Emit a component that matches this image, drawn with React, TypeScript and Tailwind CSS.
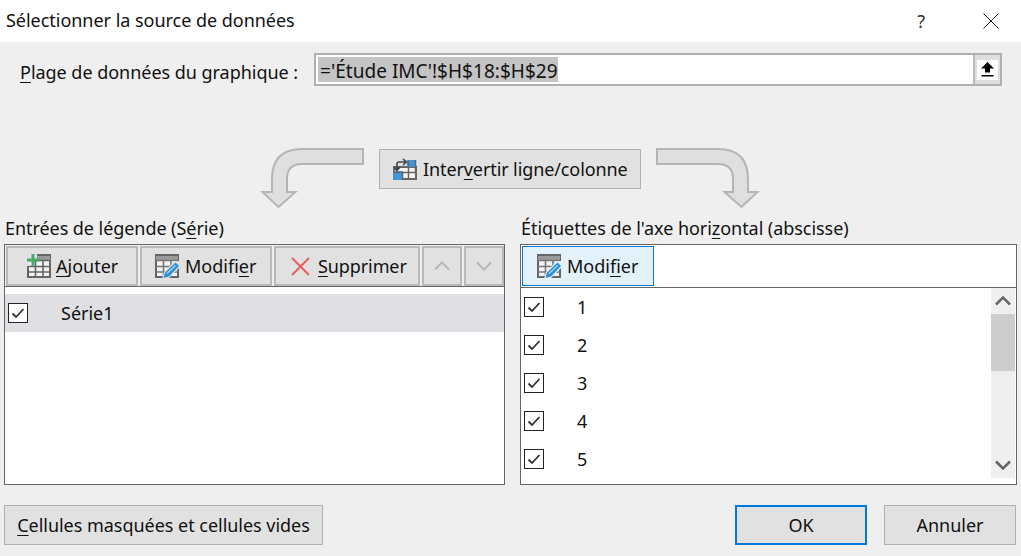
import React from 'react';

const Key = ({ children }: { children: React.ReactNode }) => (
  <span className="underline underline-offset-[3px] decoration-1">{children}</span>
);

const Check = () => (
  <span className="flex h-[20px] w-[20px] items-center justify-center border border-[#222] bg-white">
    <svg width="14" height="12" viewBox="0 0 14 12" fill="none" stroke="#333" strokeWidth="1.8">
      <path d="M1.5 6.5 L5 10 L12.5 2" />
    </svg>
  </span>
);

const TableIcon = ({ plus }: { plus?: boolean }) => (
  <svg width="24" height="24" viewBox="0 0 24 24" className="shrink-0">
    <rect x="1" y="1" width="22" height="22" fill="#f3f3f3" stroke="#666" strokeWidth="2" />
    <rect x="1" y="2" width="22" height="4" fill="#999" />
    <path d="M1 6.5 H23 M1 12.5 H23 M1 18 H23 M8.5 6 V23 M16 6 V23" stroke="#666" strokeWidth="1.6" fill="none" />
    {plus && (
      <>
        <rect x="-1" y="-1" width="11" height="7" fill="#e1e1e1" />
        <rect x="-1" y="-1" width="3" height="13" fill="#e1e1e1" />
        <path d="M6 0 V12 M0 6 H12" stroke="#46ad68" strokeWidth="3" />
      </>
    )}
  </svg>
);

const EditIcon = ({ bg = '#e1e1e1' }: { bg?: string }) => (
  <svg width="25" height="25" viewBox="0 0 25 25" className="shrink-0">
    <rect x="1" y="1" width="22" height="22" fill="#f3f3f3" stroke="#666" strokeWidth="2" />
    <rect x="1" y="2" width="22" height="4" fill="#999" />
    <path d="M1 6.5 H23 M1 12.5 H23 M1 18 H23 M8.5 6 V23 M16 6 V23" stroke="#777" strokeWidth="1.6" fill="none" />
    <path d="M7 25 L9 18 L20 7 L25 7 L25 13 L14 24 Z" fill={bg} />
    <path d="M8.5 24 L10 18.5 L20.5 8.5 L24 12 L14 22.5 Z" fill="#2f90da" />
    <path d="M12 19.5 L20.5 11.5" stroke="#a9d6f5" strokeWidth="1.2" />
  </svg>
);

const SwapIcon = () => (
  <svg width="24" height="22" viewBox="0 0 24 22" className="shrink-0">
    <rect x="1" y="9" width="22" height="12" fill="#f5f5f5" stroke="#666" strokeWidth="2" />
    <rect x="14" y="2" width="9" height="7" fill="#3f97dd" />
    <rect x="0" y="13" width="10" height="9" fill="#3f97dd" />
    <path d="M0 14.5 H24 M9.5 14 V22 M15.5 3 V22 M22.5 2 V14" stroke="#666" strokeWidth="1.5" fill="none" />
    <path d="M4 12 V6 Q4 4 6 4 H13 M1 9 L4 12.5 L7 9 M10 1 L13.5 4 L10 7" stroke="#444" strokeWidth="1.6" fill="none" />
  </svg>
);

const CurveArrow = ({ flip }: { flip?: boolean }) => (
  <svg width="105" height="62" viewBox="260 147 105 62" className={flip ? '-scale-x-100' : ''}>
    <path
      d="M363 149 H302 Q272 149 272 179 V192 H262.5 L278.5 207 L295.5 192 H287 V179 Q287 164 302 164 H363 Z"
      fill="#dfdfdf"
      stroke="#b5b5b5"
      strokeWidth="2"
    />
  </svg>
);

const Btn = ({ className, children }: { className: string; children: React.ReactNode }) => (
  <div className={`flex h-[40px] items-center border-2 border-[#b9b9b9] bg-[#e1e1e1] ${className}`}>{children}</div>
);

const Chevron = ({ down, color, w = 2 }: { down?: boolean; color: string; w?: number }) => (
  <svg width="16" height="10" viewBox="0 0 16 10" fill="none" stroke={color} strokeWidth={w}>
    <path d={down ? 'M1 1.5 L8 8.5 L15 1.5' : 'M1 8.5 L8 1.5 L15 8.5'} />
  </svg>
);

export default function App() {
  return (
    <div className="flex h-[556px] w-[1021px] flex-col overflow-hidden bg-[#efefef] font-['Noto_Sans',sans-serif] text-[18px] leading-[24px] text-[#111]">
      {/* title bar */}
      <div className="flex h-[42px] items-center bg-white pl-[6px]">
        <span className="pb-[2px] tracking-[-0.03px]">Sélectionner la source de données</span>
        <span className="ml-auto text-[#333]">?</span>
        <svg width="16" height="16" viewBox="0 0 16 16" stroke="#222" className="ml-[58px] mr-[22px]">
          <path d="M0.5 0.5 L15.5 15.5 M15.5 0.5 L0.5 15.5" />
        </svg>
      </div>

      {/* range */}
      <div className="mt-[11px] flex h-[33px] items-center">
        <span className="ml-[20px] w-[294px] shrink-0 pt-[5px] tracking-[-0.03px]">
          <Key>P</Key>lage de données du graphique :
        </span>
        <div className="flex h-full w-[688px] items-center border-2 border-[#b0b0b0] bg-white">
          <span className="ml-[2px] block h-[25px] bg-[#c4c4c4] pl-[2px] pt-[3px] text-[19px] leading-[22px] tracking-[0.03px]">='Étude IMC'!$H$18:$H$29</span>
          <div className="ml-auto flex h-full w-[27px] items-center justify-center border-l-2 border-[#b9b9b9] bg-[#dedede] p-[2px]">
            <div className="flex h-[20px] w-[22px] items-center justify-center bg-white">
              <svg width="13" height="15" viewBox="0 0 13 15">
                <path d="M6.5 0 L13 6.5 H9 V10.5 H4 V6.5 H0 Z M0.5 13 H12.5 V14.5 H0.5 Z" fill="#000" />
              </svg>
            </div>
          </div>
        </div>
      </div>

      {/* switch row */}
      <div className="ml-[260px] mt-[61px] flex h-[62px] gap-[14px]">
        <CurveArrow />
        <div className="mt-[2px] flex h-[40px] w-[262px] items-center gap-[6px] border border-[#b0b0b0] bg-[#e1e1e1] pl-[13px]">
          <SwapIcon />
          <span className="tracking-[-0.1px]">
            Inter<Key>v</Key>ertir ligne/colonne
          </span>
        </div>
        <CurveArrow flip />
      </div>

      {/* panels */}
      <div className="mt-[7px] flex gap-[15px] px-[4px]">
        <div className="w-[501px]">
          <div className="ml-[1px] h-[28px] tracking-[-0.06px]">
            Entrées de légende (S<Key>é</Key>rie)
          </div>
          <div className="h-[241px] border border-[#666] bg-white">
            <div className="flex h-[42px] gap-[2px] border-b border-[#666] bg-[#efefef] pl-[1px] pt-[1px]">
              <Btn className="w-[132px] gap-[5px] pl-[19px]">
                <TableIcon plus />
                <span>
                  <Key>A</Key>jouter
                </span>
              </Btn>
              <Btn className="w-[132px] gap-[5px] pl-[13px]">
                <EditIcon />
                <span>
                  Modifi<Key>e</Key>r
                </span>
              </Btn>
              <Btn className="w-[146px] gap-[8px] pl-[15px]">
                <svg width="19" height="19" viewBox="0 0 19 19" stroke="#ee5a5a" strokeWidth="1.8" className="shrink-0">
                  <path d="M1 1 L18 18 M18 1 L1 18" />
                </svg>
                <span className="tracking-[-0.1px]">
                  <Key>S</Key>upprimer
                </span>
              </Btn>
              <Btn className="w-[40px] justify-center">
                <Chevron color="#b7b7b7" />
              </Btn>
              <Btn className="w-[40px] justify-center">
                <Chevron down color="#b7b7b7" />
              </Btn>
            </div>
            <div className="mt-[7px] flex h-[38px] items-center bg-[#e0dfe4] pl-[3px]">
              <Check />
              <span className="ml-[33px]">Série1</span>
            </div>
          </div>
        </div>

        <div className="w-[497px]">
          <div className="ml-[1px] h-[28px] tracking-[-0.05px]">
            Étiquettes de l'axe hori<Key>z</Key>ontal (abscisse)
          </div>
          <div className="h-[241px] border border-[#666] bg-white">
            <div className="flex h-[43px] border-b border-[#666] pl-[1px] pt-[1px]">
              <div className="flex h-[40px] w-[132px] items-center gap-[5px] border border-[#0078d7] bg-[#e3f1fb] pl-[14px]">
                <EditIcon bg="#e3f1fb" />
                <span>
                  Modi<Key>f</Key>ier
                </span>
              </div>
            </div>
            <div className="flex h-[196px]">
              <div className="flex-1">
                {['1', '2', '3', '4', '5'].map((n) => (
                  <div key={n} className="flex h-[38px] items-center pl-[3px]">
                    <Check />
                    <span className="ml-[33px]">{n}</span>
                  </div>
                ))}
              </div>
              <div className="mr-[1px] flex h-[190px] w-[24px] flex-col items-center bg-[#efefef]">
                <div className="flex h-[26px] items-center">
                  <Chevron color="#666" w={2.5} />
                </div>
                <div className="h-[57px] w-full bg-[#cdcdcd]" />
                <div className="flex-1" />
                <div className="flex h-[26px] items-center">
                  <Chevron down color="#666" w={2.5} />
                </div>
              </div>
            </div>
          </div>
        </div>
      </div>

      {/* footer */}
      <div className="mt-[20px] flex px-[4px]">
        <div className="flex h-[40px] w-[319px] items-center justify-center border border-[#b0b0b0] bg-[#e1e1e1]">
          <span className="tracking-[-0.03px]">
            <Key>C</Key>ellules masquées et cellules vides
          </span>
        </div>
        <div className="ml-[412px] flex h-[40px] w-[132px] items-center justify-center border-2 border-[#0078d7] bg-[#e1e1e1]">
          OK
        </div>
        <div className="ml-[17px] flex h-[40px] w-[132px] items-center justify-center border border-[#b0b0b0] bg-[#e1e1e1]">
          Annuler
        </div>
      </div>
    </div>
  );
}
